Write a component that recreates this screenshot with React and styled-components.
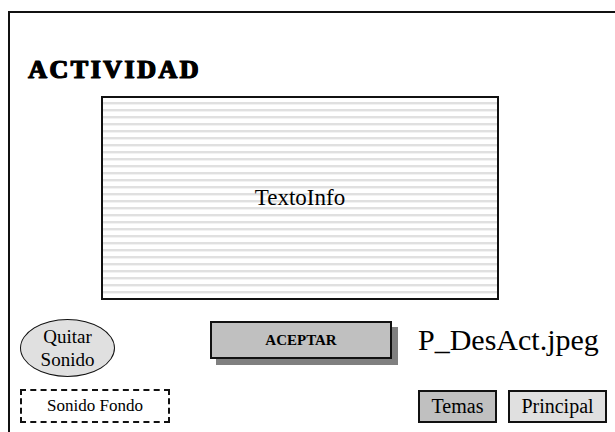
import React from "react";
import styled, { createGlobalStyle } from "styled-components";

const GlobalStyle = createGlobalStyle`
  html, body {
    margin: 0;
    padding: 0;
    background: #fff;
    overflow: hidden;
  }
  body {
    font-family: "Liberation Serif", "Times New Roman", serif;
    color: #000;
  }
`;

const Frame = styled.div`
  margin: 11px 0 0 8px;
  width: 700px;
  height: 480px;
  border: 2px solid #111;
  box-sizing: border-box;
  padding: 44px 0 0 18px;
  display: flex;
  flex-direction: column;
`;

/* heavy "fat face" heading */
const Title = styled.h1`
  margin: 0;
  font-size: 26px;
  line-height: 26px;
  font-weight: 900;
  letter-spacing: 2.5px;
  -webkit-text-stroke: 1px #000;
  text-shadow: 1px 0 0 #000;
`;

const TextBox = styled.div`
  margin: 13px 0 0 73px;
  width: 398px;
  height: 204px;
  box-sizing: border-box;
  border: 2px solid #111;
  display: flex;
  align-items: center;
  justify-content: center;
  font-size: 23px;
  background: repeating-linear-gradient(
    to bottom,
    #fff 0px,
    #fff 4px,
    #e0e0e0 4px,
    #e0e0e0 6px,
    #f2f2f2 6px,
    #f2f2f2 7px
  );
`;

const Bottom = styled.div`
  display: flex;
  margin-top: 19px;
  margin-left: -8px;
`;

const LeftCol = styled.div`
  width: 150px;
  display: flex;
  flex-direction: column;
  gap: 12px;
`;

const Oval = styled.div`
  width: 95px;
  height: 58px;
  box-sizing: border-box;
  border: 1.5px solid #111;
  border-radius: 50%;
  background: #e0e0e0;
  display: flex;
  align-items: center;
  justify-content: center;
  text-align: center;
  font-size: 19px;
  line-height: 23px;
`;

const Dashed = styled.div`
  width: 150px;
  height: 34px;
  box-sizing: border-box;
  border: 2px dashed #111;
  display: flex;
  align-items: center;
  justify-content: center;
  font-size: 17px;
`;

const MidCol = styled.div`
  margin-left: 40px;
  padding-top: 2px;
`;

const Accept = styled.div`
  width: 182px;
  height: 38px;
  box-sizing: border-box;
  border: 2px solid #111;
  background: #c0c0c0;
  box-shadow: 6px 6px 0 #808080;
  display: flex;
  align-items: center;
  justify-content: center;
  font-size: 15px;
  font-weight: bold;
`;

const RightCol = styled.div`
  margin-left: 26px;
  display: flex;
  flex-direction: column;
  justify-content: space-between;
`;

const FileName = styled.div`
  font-size: 30px;
  line-height: 32px;
  margin-top: 5px;
  white-space: nowrap;
`;

const Buttons = styled.div`
  display: flex;
  gap: 11px;
`;

const NavButton = styled.div`
  width: ${(p) => p.$w}px;
  height: 33px;
  box-sizing: border-box;
  border: 2px solid #111;
  background: ${(p) => p.$bg};
  display: flex;
  align-items: center;
  justify-content: center;
  font-size: 20px;
`;

export default function App() {
  return (
    <>
      <GlobalStyle />
      <Frame>
        <Title>ACTIVIDAD</Title>
        <TextBox>TextoInfo</TextBox>
        <Bottom>
          <LeftCol>
            <Oval>
              Quitar
              <br />
              Sonido
            </Oval>
            <Dashed>Sonido Fondo</Dashed>
          </LeftCol>
          <MidCol>
            <Accept>ACEPTAR</Accept>
          </MidCol>
          <RightCol>
            <FileName>P_DesAct.jpeg</FileName>
            <Buttons>
              <NavButton $w={79} $bg="#c0c0c0">Temas</NavButton>
              <NavButton $w={99} $bg="#e0e0e0">Principal</NavButton>
            </Buttons>
          </RightCol>
        </Bottom>
      </Frame>
    </>
  );
}
